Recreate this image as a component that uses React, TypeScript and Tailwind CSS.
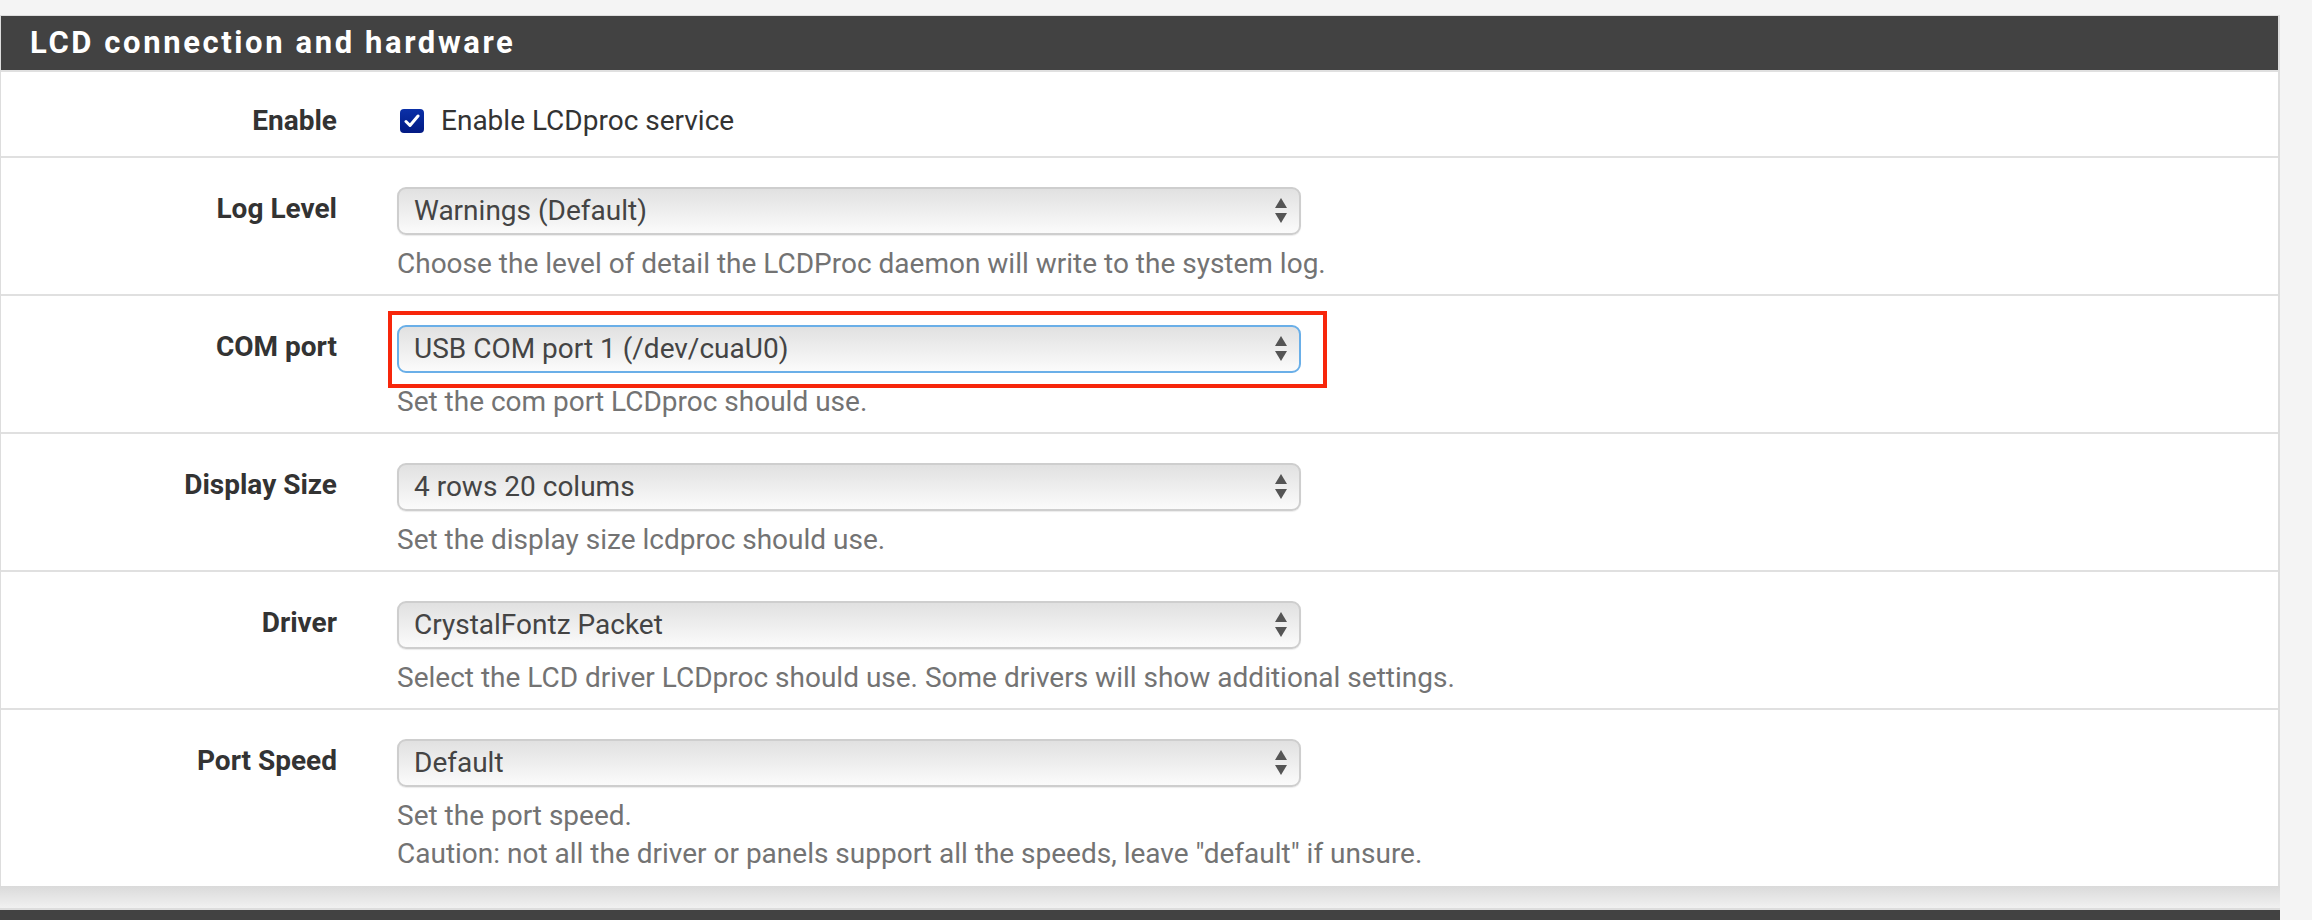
import React from 'react';

type Row = {
  label: string;
  value: string;
  help: string[];
  focused?: boolean;
};

const rows: Row[] = [
  {
    label: 'Log Level',
    value: 'Warnings (Default)',
    help: ['Choose the level of detail the LCDProc daemon will write to the system log.'],
  },
  {
    label: 'COM port',
    value: 'USB COM port 1 (/dev/cuaU0)',
    help: ['Set the com port LCDproc should use.'],
    focused: true,
  },
  {
    label: 'Display Size',
    value: '4 rows 20 colums',
    help: ['Set the display size lcdproc should use.'],
  },
  {
    label: 'Driver',
    value: 'CrystalFontz Packet',
    help: ['Select the LCD driver LCDproc should use. Some drivers will show additional settings.'],
  },
  {
    label: 'Port Speed',
    value: 'Default',
    help: [
      'Set the port speed.',
      'Caution: not all the driver or panels support all the speeds, leave "default" if unsure.',
    ],
  },
];

const SelectBox = ({ value, focused }: { value: string; focused?: boolean }) => (
  <div className="relative w-[904px]">
    <div
      className={
        focused
          ? 'flex h-[48px] items-center justify-between rounded-[9px] border-2 border-[#6aafe8] bg-gradient-to-b from-[#e1e1e1] to-[#fbfbfb] pl-[15px] pr-[12px] text-[#444444]'
          : 'flex h-[48px] items-center justify-between rounded-[9px] border-2 border-[#cecece] bg-gradient-to-b from-[#e1e1e1] to-[#fbfbfb] pl-[15px] pr-[12px] text-[#444444] shadow-[0_1px_1px_rgba(0,0,0,0.08)]'
      }
    >
      <span>{value}</span>
      <svg width="12" height="26" viewBox="0 0 12 26">
        <path d="M6 0 L12 10 L0 10 Z" fill="#555555" />
        <path d="M0 15 L12 15 L6 25 Z" fill="#555555" />
      </svg>
    </div>
    {/* red annotation frame */}
    {focused && (
      <div className="pointer-events-none absolute -left-[9px] -right-[26px] -top-[14px] -bottom-[15px] border-4 border-[#f7260b]" />
    )}
  </div>
);

export default function App() {
  return (
    <div className="min-h-[920px] bg-[#f4f4f4] pt-[15px] font-[family-name:Roboto,'Liberation_Sans',sans-serif] text-[28px] leading-[38px] text-[#333333]">
      <div className="w-[2280px] border-l border-r-2 border-t border-[#dddddd] bg-white">
        <div className="flex h-[54px] items-center bg-[#424242] pl-[29px]">
          <h2 className="text-[31px] font-bold tracking-[2.6px] text-white">LCD connection and hardware</h2>
        </div>

        <div className="flex border-t-2 border-[#e0e0e0] pb-[16px] pt-[30px]">
          <div className="w-[336px] text-right font-bold">Enable</div>
          <label className="ml-[63px] flex items-center gap-[17px]">
            <span className="flex h-[24px] w-[24px] items-center justify-center rounded-[4px] bg-gradient-to-b from-[#0b30a8] to-[#031a84]">
              <svg width="16" height="14" viewBox="0 0 16 14">
                <path d="M2 7.5 L6 11.5 L14 2" fill="none" stroke="white" strokeWidth="3" strokeLinecap="round" strokeLinejoin="round" />
              </svg>
            </span>
            <span>Enable LCDproc service</span>
          </label>
        </div>

        {rows.map((row, i) => (
          <div
            key={row.label}
            className={
              i === rows.length - 1
                ? 'flex border-t-2 border-[#e0e0e0] pb-[13px]'
                : 'flex border-t-2 border-[#e0e0e0] pb-[11px]'
            }
          >
            <div className="w-[336px] pt-[32px] text-right font-bold">{row.label}</div>
            <div className="ml-[60px] pt-[29px]">
              <SelectBox value={row.value} focused={row.focused} />
              <div className="mt-[10px] text-[#737373]">
                {row.help.map((line) => (
                  <div key={line}>{line}</div>
                ))}
              </div>
            </div>
          </div>
        ))}
      </div>

      <div className="h-[22px] w-[2280px] bg-gradient-to-b from-[#dadada] to-[#f1f1f1]" />
      <div className="h-[12px] w-[2280px] border-t-2 border-[#dddddd] bg-[#424242]" />
    </div>
  );
}
